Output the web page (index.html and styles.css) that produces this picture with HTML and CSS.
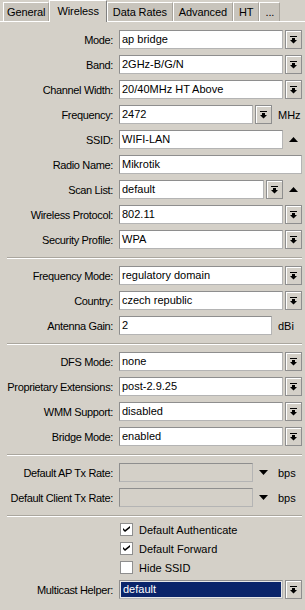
FILE: index.html
```html
<!DOCTYPE html>
<html lang="en">
<head>
    <meta charset="UTF-8">
    <meta name="viewport" content="width=device-width, initial-scale=1.0">
    <title>Wireless</title>
    <link rel="stylesheet" href="styles.css">
</head>
<body>
    <div class="tabs">
        <span class="tab first">General</span>
        <span class="tab active">Wireless</span>
        <span class="tab">Data Rates</span>
        <span class="tab">Advanced</span>
        <span class="tab">HT</span>
        <span class="tab">...</span>
    </div>

    <div class="form">
        <div class="section">
            <div class="row">
                <span class="lbl">Mode:</span>
                <div class="field"><span class="box">ap bridge</span><span class="btn"><svg width="7" height="8" viewBox="0 0 7 8"><rect width="7" height="1"/><path d="M2 2h3v2h2L3.5 7.5 0 4h2z"/></svg></span></div>
            </div>
            <div class="row">
                <span class="lbl">Band:</span>
                <div class="field"><span class="box">2GHz-B/G/N</span><span class="btn"><svg width="7" height="8" viewBox="0 0 7 8"><rect width="7" height="1"/><path d="M2 2h3v2h2L3.5 7.5 0 4h2z"/></svg></span></div>
            </div>
            <div class="row">
                <span class="lbl">Channel Width:</span>
                <div class="field"><span class="box">20/40MHz HT Above</span><span class="btn"><svg width="7" height="8" viewBox="0 0 7 8"><rect width="7" height="1"/><path d="M2 2h3v2h2L3.5 7.5 0 4h2z"/></svg></span></div>
            </div>
            <div class="row">
                <span class="lbl">Frequency:</span>
                <div class="field"><span class="box">2472</span><span class="btn"><svg width="7" height="8" viewBox="0 0 7 8"><rect width="7" height="1"/><path d="M2 2h3v2h2L3.5 7.5 0 4h2z"/></svg></span><span class="unit">MHz</span></div>
            </div>
            <div class="row">
                <span class="lbl">SSID:</span>
                <div class="field"><span class="box">WIFI-LAN</span><span class="slot"><svg width="9" height="5" viewBox="0 0 9 5"><path d="M0 5h9L4.5 0z"/></svg></span></div>
            </div>
            <div class="row">
                <span class="lbl">Radio Name:</span>
                <div class="field"><span class="box">Mikrotik</span></div>
            </div>
            <div class="row">
                <span class="lbl">Scan List:</span>
                <div class="field"><span class="box">default</span><span class="btn"><svg width="7" height="8" viewBox="0 0 7 8"><rect width="7" height="1"/><path d="M2 2h3v2h2L3.5 7.5 0 4h2z"/></svg></span><span class="slot"><svg width="9" height="5" viewBox="0 0 9 5"><path d="M0 5h9L4.5 0z"/></svg></span></div>
            </div>
            <div class="row">
                <span class="lbl">Wireless Protocol:</span>
                <div class="field"><span class="box">802.11</span><span class="btn"><svg width="7" height="8" viewBox="0 0 7 8"><rect width="7" height="1"/><path d="M2 2h3v2h2L3.5 7.5 0 4h2z"/></svg></span></div>
            </div>
            <div class="row">
                <span class="lbl">Security Profile:</span>
                <div class="field"><span class="box">WPA</span><span class="btn"><svg width="7" height="8" viewBox="0 0 7 8"><rect width="7" height="1"/><path d="M2 2h3v2h2L3.5 7.5 0 4h2z"/></svg></span></div>
            </div>
        </div>

        <div class="sep"></div>

        <div class="section">
            <div class="row">
                <span class="lbl">Frequency Mode:</span>
                <div class="field"><span class="box">regulatory domain</span><span class="btn"><svg width="7" height="8" viewBox="0 0 7 8"><rect width="7" height="1"/><path d="M2 2h3v2h2L3.5 7.5 0 4h2z"/></svg></span></div>
            </div>
            <div class="row">
                <span class="lbl">Country:</span>
                <div class="field"><span class="box">czech republic</span><span class="btn"><svg width="7" height="8" viewBox="0 0 7 8"><rect width="7" height="1"/><path d="M2 2h3v2h2L3.5 7.5 0 4h2z"/></svg></span></div>
            </div>
            <div class="row">
                <span class="lbl">Antenna Gain:</span>
                <div class="field"><span class="box">2</span><span class="unit">dBi</span></div>
            </div>
        </div>

        <div class="sep"></div>

        <div class="section">
            <div class="row">
                <span class="lbl">DFS Mode:</span>
                <div class="field"><span class="box">none</span><span class="btn"><svg width="7" height="8" viewBox="0 0 7 8"><rect width="7" height="1"/><path d="M2 2h3v2h2L3.5 7.5 0 4h2z"/></svg></span></div>
            </div>
            <div class="row">
                <span class="lbl">Proprietary Extensions:</span>
                <div class="field"><span class="box">post-2.9.25</span><span class="btn"><svg width="7" height="8" viewBox="0 0 7 8"><rect width="7" height="1"/><path d="M2 2h3v2h2L3.5 7.5 0 4h2z"/></svg></span></div>
            </div>
            <div class="row">
                <span class="lbl">WMM Support:</span>
                <div class="field"><span class="box">disabled</span><span class="btn"><svg width="7" height="8" viewBox="0 0 7 8"><rect width="7" height="1"/><path d="M2 2h3v2h2L3.5 7.5 0 4h2z"/></svg></span></div>
            </div>
            <div class="row">
                <span class="lbl">Bridge Mode:</span>
                <div class="field"><span class="box">enabled</span><span class="btn"><svg width="7" height="8" viewBox="0 0 7 8"><rect width="7" height="1"/><path d="M2 2h3v2h2L3.5 7.5 0 4h2z"/></svg></span></div>
            </div>
        </div>

        <div class="sep"></div>

        <div class="section">
            <div class="row">
                <span class="lbl">Default AP Tx Rate:</span>
                <div class="field"><span class="box off"></span><span class="slot"><svg width="9" height="5" viewBox="0 0 9 5"><path d="M0 0h9L4.5 5z"/></svg></span><span class="unit">bps</span></div>
            </div>
            <div class="row">
                <span class="lbl">Default Client Tx Rate:</span>
                <div class="field"><span class="box off"></span><span class="slot"><svg width="9" height="5" viewBox="0 0 9 5"><path d="M0 0h9L4.5 5z"/></svg></span><span class="unit">bps</span></div>
            </div>
        </div>

        <div class="sep"></div>

        <div class="checks">
            <div class="check-row"><span class="cb"><svg width="7" height="7" viewBox="0 0 7 7"><path d="M0 2l2 2 5-4v2L2 6 0 4z"/></svg></span>Default Authenticate</div>
            <div class="check-row"><span class="cb"><svg width="7" height="7" viewBox="0 0 7 7"><path d="M0 2l2 2 5-4v2L2 6 0 4z"/></svg></span>Default Forward</div>
            <div class="check-row"><span class="cb"></span>Hide SSID</div>
        </div>

        <div class="row last">
            <span class="lbl">Multicast Helper:</span>
            <div class="field"><span class="box sel">default</span><span class="btn"><svg width="7" height="8" viewBox="0 0 7 8"><rect width="7" height="1"/><path d="M2 2h3v2h2L3.5 7.5 0 4h2z"/></svg></span></div>
        </div>
    </div>
</body>
</html>
```

FILE: styles.css
```css
* {
    margin: 0;
    padding: 0;
    box-sizing: border-box;
}

body {
    font-family: "Liberation Sans", Arial, sans-serif;
    font-size: 11px;
    background-color: #d4d0c8;
    color: #000;
    width: 305px;
    height: 610px;
    overflow: hidden;
}

/* tab strip */
.tabs {
    display: flex;
    align-items: flex-end;
    height: 22px;
    padding-left: 3px;
    border-bottom: 1px solid #fff;
}

.tab {
    height: 19px;
    line-height: 18px;
    padding: 0 5px;
    background-color: #c8c4bc;
    border-top: 1px solid #fff;
    border-left: 1px solid #fff;
    border-right: 1px solid #a8a49c;
    letter-spacing: -0.1px;
    white-space: nowrap;
}

.tab.first {
    padding: 0 3px;
}

.tab.active {
    height: 22px;
    line-height: 20px;
    margin-bottom: -1px;
    padding: 0 7px;
    background-color: #d4d0c8;
    border-right: 1px solid #808080;
}

/* form */
.form {
    padding: 8px 3px 0 0;
}

.row {
    display: flex;
    align-items: center;
    height: 19px;
    margin-top: 6px;
}

.section .row:first-child {
    margin-top: 0;
}

.lbl {
    flex: none;
    width: 113px;
    margin-right: 6px;
    text-align: right;
    letter-spacing: -0.35px;
    white-space: nowrap;
}

.field {
    flex: 1;
    display: flex;
    align-items: center;
    gap: 2px;
    height: 19px;
}

.box {
    flex: 1;
    min-width: 0;
    height: 19px;
    padding: 0 2px;
    line-height: 17px;
    background-color: #fff;
    border: 1px solid #8e8e8e;
    border-right-color: #b4b4b4;
    border-bottom-color: #b4b4b4;
    white-space: nowrap;
    overflow: hidden;
}

.box.off {
    background-color: #d4d0c8;
}

.box.sel {
    background-color: #0a246a;
    color: #fff;
    box-shadow: inset 0 0 0 1px #e8e8e8;
    padding-left: 3px;
}

.btn {
    flex: none;
    width: 17px;
    height: 19px;
    display: flex;
    align-items: center;
    justify-content: center;
    background-color: #d4d0c8;
    border: 1px solid #8e8e8e;
    box-shadow: inset 1px 1px #fff;
}

.slot {
    flex: none;
    width: 17px;
    height: 19px;
    display: flex;
    align-items: center;
    justify-content: center;
}

.unit {
    flex: none;
    width: 28px;
    padding-left: 4px;
}

.sep {
    margin: 8px 0 7px 7px;
    border-top: 1px solid #aaa69e;
    border-bottom: 1px solid #fff;
}

/* checkboxes */
.checks {
    margin-top: -4px;
}

.check-row {
    display: flex;
    align-items: center;
    gap: 6px;
    height: 19px;
    padding-left: 120px;
}

.cb {
    width: 13px;
    height: 13px;
    display: flex;
    align-items: center;
    justify-content: center;
    background-color: #fff;
    border: 1px solid #8e8e8e;
}

.row.last {
    margin-top: 3px;
}
```
